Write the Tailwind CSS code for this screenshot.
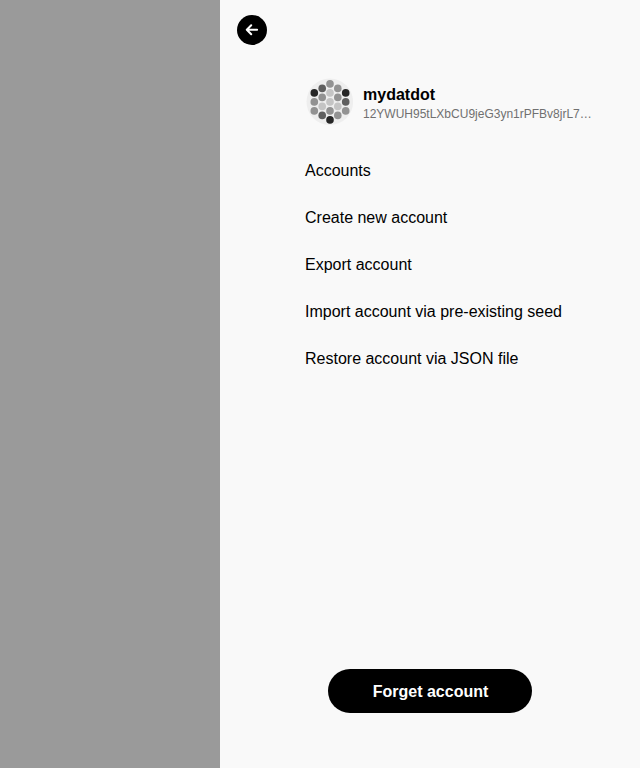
<!DOCTYPE html>
<html lang="en">
<head>
<meta charset="utf-8">
<title>Account</title>
<script src="https://cdn.jsdelivr.net/npm/@tailwindcss/browser@4"></script>
</head>
<body class="flex h-screen overflow-hidden bg-[#9a9a9a] font-['Liberation_Sans',Arial,sans-serif] text-black">
<aside class="ml-auto flex h-full w-[420px] flex-col bg-[#f9f9f9] pt-[15px] pb-[55px]">
  <button class="ml-[17px] flex size-[30px] items-center justify-center rounded-full bg-black" aria-label="Back">
    <svg class="size-[30px]" viewBox="0 0 30 30" fill="none" stroke="#fff" stroke-width="2" stroke-linecap="round" stroke-linejoin="round"><path d="M20.1 14.7H9.9M14.2 10.2L9.8 14.7L14.2 19.2"/></svg>
  </button>
  <main class="flex flex-1 flex-col pt-[33px] pl-[85px]">
    <div class="flex h-12 items-center">
      <svg class="size-12 shrink-0" viewBox="305 78 48 48">
        <circle cx="329.8" cy="101.8" r="23.3" fill="#eeeeee"/>
        <g fill="#929292">
          <circle cx="314.3" cy="101.9" r="3.8"/><circle cx="314.3" cy="110.9" r="3.8"/>
          <circle cx="322.2" cy="97.4" r="3.8"/><circle cx="330" cy="83.9" r="3.8"/>
          <circle cx="330" cy="110.9" r="3.8"/><circle cx="337.8" cy="88.4" r="3.8"/>
          <circle cx="337.8" cy="97.4" r="3.8"/><circle cx="337.8" cy="115.4" r="3.8"/>
          <circle cx="345.7" cy="110.9" r="3.8"/>
        </g>
        <g fill="#c4c4c4">
          <circle cx="322.2" cy="106.4" r="3.8"/><circle cx="330" cy="92.9" r="3.8"/>
          <circle cx="330" cy="101.9" r="3.8"/><circle cx="337.8" cy="106.4" r="3.8"/>
        </g>
        <g fill="#5f5f5f">
          <circle cx="322.2" cy="88.4" r="3.8"/><circle cx="322.2" cy="115.4" r="3.8"/>
          <circle cx="345.7" cy="101.9" r="3.8"/>
        </g>
        <g fill="#262626">
          <circle cx="314.3" cy="92.9" r="3.8"/><circle cx="345.7" cy="92.9" r="3.8"/>
          <circle cx="330" cy="119.9" r="3.8"/>
        </g>
      </svg>
      <div class="ml-[10px] pt-1">
        <div class="text-base leading-5 font-bold">mydatdot</div>
        <div class="text-xs leading-[18px] text-[#707070]">12YWUH95tLXbCU9jeG3yn1rPFBv8jrL7…</div>
      </div>
    </div>
    <nav class="mt-[33px] flex flex-col gap-[23px] text-base leading-6">
      <a>Accounts</a>
      <a>Create new account</a>
      <a>Export account</a>
      <a>Import account via pre-existing seed</a>
      <a>Restore account via JSON file</a>
    </nav>
  </main>
  <button class="h-11 w-[204px] self-center rounded-full bg-black pt-0.5 pl-px text-base font-bold text-white">Forget account</button>
</aside>
</body>
</html>
